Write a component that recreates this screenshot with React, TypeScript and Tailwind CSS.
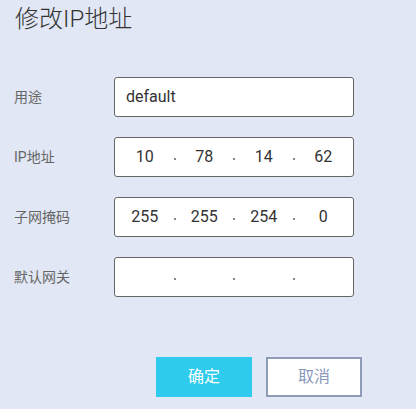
import React from 'react';

const font = { fontFamily: 'Roboto, "Noto Sans CJK SC", sans-serif' };

const IpInput = ({ parts }: { parts: string[] }) => (
  <div className="flex h-10 w-[240px] items-center rounded-[3px] border border-[#666] bg-white">
    {parts.map((part, i) => (
      <React.Fragment key={i}>
        <div className="flex-1 text-center text-base text-[#333]">{part}</div>
        {i < parts.length - 1 && (
          <span className="flex w-0 justify-center">
            <span className="mt-[3px] h-[2px] w-[2px] shrink-0 bg-[#888]" />
          </span>
        )}
      </React.Fragment>
    ))}
  </div>
);

const Row = ({ label, children }: { label: string; children: React.ReactNode }) => (
  <div className="flex h-10 items-center">
    <div className="w-[100px] text-sm text-[#666]">{label}</div>
    {children}
  </div>
);

export default function App() {
  return (
    <div className="h-[409px] w-[416px] bg-[#e1e7f4] pl-[14px]" style={font}>
      <h1 className="pl-px pt-[3px] text-2xl font-light leading-8 text-[#333]">修改IP地址</h1>
      <div className="mt-[42px] flex flex-col gap-5">
        <Row label="用途">
          <div className="flex h-10 w-[240px] items-center rounded-[3px] border border-[#666] bg-white pl-[11px] text-base text-[#333]">
            default
          </div>
        </Row>
        <Row label="IP地址">
          <IpInput parts={['10', '78', '14', '62']} />
        </Row>
        <Row label="子网掩码">
          <IpInput parts={['255', '255', '254', '0']} />
        </Row>
        <Row label="默认网关">
          <IpInput parts={['', '', '', '']} />
        </Row>
      </div>
      <div className="mt-[60px] flex gap-[14px] pl-[142px]">
        <button className="h-10 w-24 bg-[#2ecbec] text-base text-white">确定</button>
        <button className="h-10 w-24 border-2 border-[#8f9cb8] bg-white text-base text-[#8a99bb]">取消</button>
      </div>
    </div>
  );
}
